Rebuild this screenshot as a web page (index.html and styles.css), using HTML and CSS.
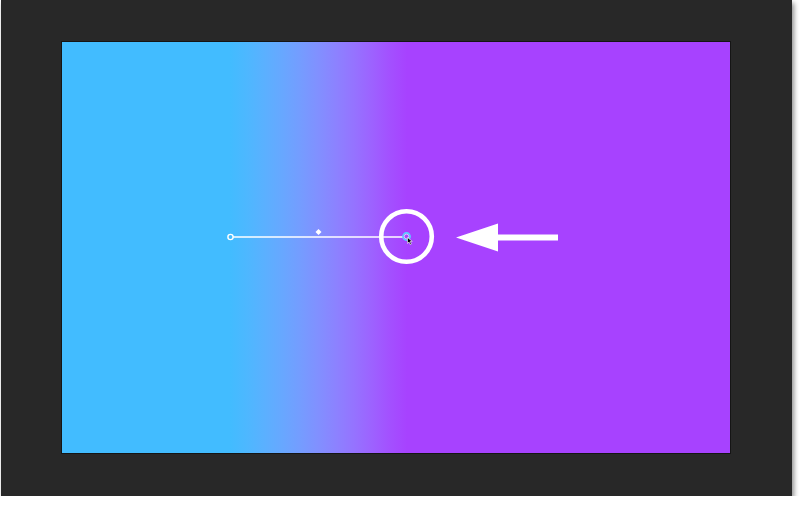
FILE: index.html
```html
<!DOCTYPE html>
<html>
<head>
<meta charset="utf-8">
<link rel="stylesheet" href="styles.css">
</head>
<body>
<div class="panel">
  <div class="canvas">
    <svg class="overlay" viewBox="62 42 668 411" width="668" height="411">
      <line x1="233" y1="237" x2="403" y2="237" stroke="#fff" stroke-width="1.3"/>
      <circle cx="230.5" cy="237" r="2.6" fill="#42bcff" stroke="#fff" stroke-width="1.4"/>
      <path d="M318.5 229 L321.5 232 L318.5 235 L315.5 232 Z" fill="#fff"/>
      <circle cx="406.5" cy="236.5" r="3.6" fill="none" stroke="#5ad0ff" stroke-width="1.6"/>
      <circle cx="406.5" cy="236.5" r="2.3" fill="none" stroke="#e9dcff" stroke-width="0.8"/>
      <path d="M407.5 237.5 L407.5 243.5 L409 242 L410.3 244.6 L411.4 244 L410.2 241.5 L412.3 241.4 Z" fill="#000" stroke="#fff" stroke-width="0.6"/>
      <circle cx="406.5" cy="236.5" r="25.3" fill="none" stroke="#fff" stroke-width="4.6"/>
      <path d="M456 237.5 L498 223.5 L498 234.5 L558 234.5 L558 240.5 L498 240.5 L498 251.5 Z" fill="#fff"/>
    </svg>
  </div>
</div>
</body>
</html>
```
FILE: styles.css
```css
html, body {
  margin: 0;
  padding: 0;
  background: #ffffff;
}
.panel {
  width: 791px;
  height: 496px;
  margin-left: 1px;
  background: #282828;
  box-shadow: 2px 3px 5px rgba(0, 0, 0, 0.45);
  padding: 41px 0 0 60px;
  box-sizing: border-box;
}
.canvas {
  position: relative;
  width: 670px;
  height: 413px;
  box-sizing: border-box;
  border: 1px solid #151515;
  background: linear-gradient(to right,
    #42bcff 168px,
    #4eb7ff 186px,
    #5bb0ff 203px,
    #68a7ff 221px,
    #759cff 239px,
    #8190ff 256px,
    #8c82ff 274px,
    #9573ff 292px,
    #9d62ff 310px,
    #a351ff 327px,
    #a742ff 345px);
}
.overlay {
  position: absolute;
  left: 0;
  top: 0;
  display: block;
}
```
